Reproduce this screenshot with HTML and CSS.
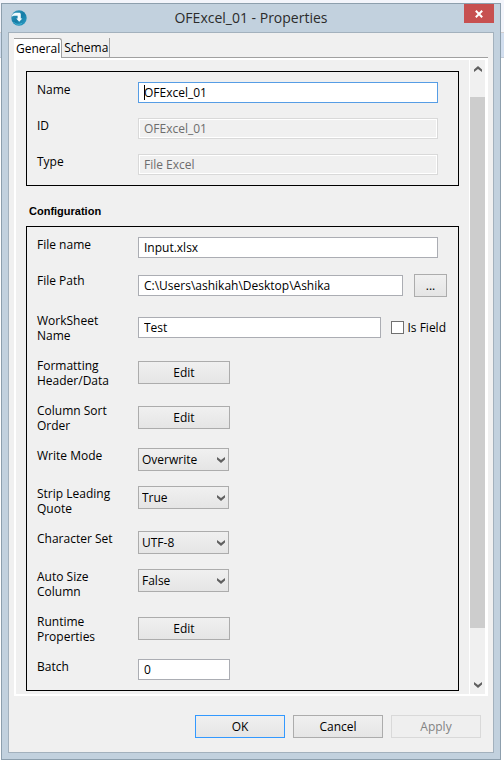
FILE: index.html
```html
<!DOCTYPE html>
<html lang="en">
<head>
<meta charset="utf-8">
<meta name="viewport" content="width=device-width, initial-scale=1">
<title>OFExcel_01 - Properties</title>
<link rel="stylesheet" href="styles.css">
</head>
<body>
<main class="window">
  <header class="titlebar">
    <svg class="app-icon" width="16" height="16" viewBox="0 0 16 16" aria-hidden="true">
      <defs>
        <linearGradient id="disc" x1="0" y1="0" x2="1" y2="1">
          <stop offset="0" stop-color="#3a9fc0"/>
          <stop offset="0.5" stop-color="#157ca6"/>
          <stop offset="1" stop-color="#2f9fc6"/>
        </linearGradient>
      </defs>
      <circle cx="8" cy="8" r="7.7" fill="url(#disc)"/>
      <path d="M1 5.6 C1.8 3.6 3.4 2.8 5 2.8 H8 C9.2 2.8 9.8 3.4 9.8 4.6 V8.4 H11.4 L8.2 11.8 L5.2 8.4 H6.6 V5.8 H3.4 C2.4 5.8 1.6 6 0.8 7 Z" fill="#f2fafc"/>
      <path d="M2.6 12.2 C4.6 14.6 8 15 10.8 13.4" fill="none" stroke="#49b9d8" stroke-width="1"/>
    </svg>
    <h1 class="title">OFExcel_01 - Properties</h1>
    <button class="close" type="button" aria-label="Close">
      <svg width="8" height="8" viewBox="0 0 8 8" aria-hidden="true"><path d="M0.8 0.8 L7.2 7.2 M7.2 0.8 L0.8 7.2" stroke="#fff" stroke-width="2"/></svg>
    </button>
  </header>

  <form class="client">
    <nav class="tabs">
      <button class="tab tab-active" type="button">General</button>
      <button class="tab" type="button">Schema</button>
    </nav>

    <div class="panel">
      <div class="content">
        <section class="group">
          <div class="row">
            <label for="name">Name</label>
            <div class="field field-wide focused">
              <input class="text" id="name" type="text" value="OFExcel_01">
              <span class="caret"></span>
            </div>
          </div>
          <div class="row">
            <label for="id">ID</label>
            <div class="field field-wide"><input class="text" id="id" type="text" value="OFExcel_01" disabled></div>
          </div>
          <div class="row">
            <label for="type">Type</label>
            <div class="field field-wide"><input class="text" id="type" type="text" value="File Excel" disabled></div>
          </div>
        </section>

        <h2 class="heading">Configuration</h2>

        <section class="group">
          <div class="row">
            <label for="file-name">File name</label>
            <div class="field field-wide"><input class="text" id="file-name" type="text" value="Input.xlsx"></div>
          </div>
          <div class="row row-path">
            <label for="file-path">File Path</label>
            <div class="field field-path">
              <input class="text" id="file-path" type="text" value="C:\Users\ashikah\Desktop\Ashika">
              <button class="button browse" type="button">...</button>
            </div>
          </div>
          <div class="row row-middle">
            <label for="sheet">WorkSheet Name</label>
            <div class="field field-sheet">
              <input class="text" id="sheet" type="text" value="Test">
              <label class="check" for="is-field"><input class="box" id="is-field" type="checkbox">Is Field</label>
            </div>
          </div>
          <div class="row row-middle">
            <label for="formatting">Formatting Header/Data</label>
            <div class="field"><button class="button edit" id="formatting" type="button">Edit</button></div>
          </div>
          <div class="row row-middle">
            <label for="sort">Column Sort Order</label>
            <div class="field"><button class="button edit" id="sort" type="button">Edit</button></div>
          </div>
          <div class="row">
            <label for="mode">Write Mode</label>
            <div class="field"><div class="combo">
              <select class="select" id="mode"><option>Overwrite</option></select>
              <svg class="arrow" width="8" height="6" viewBox="0 0 8 6" aria-hidden="true"><path d="M0 0 L4 3 L8 0 V2.4 L4 6 L0 2.4 Z"/></svg>
            </div></div>
          </div>
          <div class="row">
            <label for="quote">Strip Leading Quote</label>
            <div class="field"><div class="combo">
              <select class="select" id="quote"><option>True</option></select>
              <svg class="arrow" width="8" height="6" viewBox="0 0 8 6" aria-hidden="true"><path d="M0 0 L4 3 L8 0 V2.4 L4 6 L0 2.4 Z"/></svg>
            </div></div>
          </div>
          <div class="row">
            <label for="charset">Character Set</label>
            <div class="field"><div class="combo">
              <select class="select" id="charset"><option>UTF-8</option></select>
              <svg class="arrow" width="8" height="6" viewBox="0 0 8 6" aria-hidden="true"><path d="M0 0 L4 3 L8 0 V2.4 L4 6 L0 2.4 Z"/></svg>
            </div></div>
          </div>
          <div class="row">
            <label for="autosize">Auto Size Column</label>
            <div class="field"><div class="combo">
              <select class="select" id="autosize"><option>False</option></select>
              <svg class="arrow" width="8" height="6" viewBox="0 0 8 6" aria-hidden="true"><path d="M0 0 L4 3 L8 0 V2.4 L4 6 L0 2.4 Z"/></svg>
            </div></div>
          </div>
          <div class="row row-middle">
            <label for="runtime">Runtime Properties</label>
            <div class="field"><button class="button edit" id="runtime" type="button">Edit</button></div>
          </div>
          <div class="row">
            <label for="batch">Batch</label>
            <div class="field"><input class="text text-short" id="batch" type="text" value="0"></div>
          </div>
        </section>
      </div>

      <div class="scrollbar">
        <button class="scroll-button" type="button" aria-label="Scroll up">
          <svg width="8" height="6" viewBox="0 0 8 6" aria-hidden="true"><path d="M0 6 L4 3 L8 6 V3.6 L4 0 L0 3.6 Z"/></svg>
        </button>
        <div class="track">
          <div class="thumb"></div>
        </div>
        <button class="scroll-button" type="button" aria-label="Scroll down">
          <svg width="8" height="6" viewBox="0 0 8 6" aria-hidden="true"><path d="M0 0 L4 3 L8 0 V2.4 L4 6 L0 2.4 Z"/></svg>
        </button>
      </div>
    </div>

    <footer class="footer">
      <button class="button action default" type="button">OK</button>
      <button class="button action" type="button">Cancel</button>
      <button class="button action" type="button" disabled>Apply</button>
    </footer>
  </form>
</main>
</body>
</html>
```
FILE: styles.css
```css
* {
  box-sizing: border-box;
}

body {
  margin: 0;
  padding: 3px 3px 2px 1px;
  background: linear-gradient(#f3f5fb 32px, #d3cfcf 32px, #d3cfcf 33px, #d3dfef 33px, #d3dfef 57px, #c4ccd8 57px, #c4ccd8 58px, #fff 58px) no-repeat #fff;
  color: #000;
  font: 12px/15px "Open Sans", "Noto Sans", sans-serif;
}

button,
input,
select {
  margin: 0;
  font: inherit;
  color: inherit;
}

.window {
  padding: 0 6px 6px;
  border: 1px solid #8d9fad;
  background: #c2d1de;
}

.titlebar {
  display: grid;
  grid-template-columns: 1fr auto 1fr;
  height: 28px;
}

.app-icon {
  margin: 6px 0 0 3px;
}

.title {
  margin: 0;
  font-size: 14px;
  font-weight: 400;
  line-height: 28px;
  color: #2b2b2b;
}

.close {
  display: flex;
  align-items: center;
  justify-content: center;
  justify-self: end;
  width: 30px;
  height: 19px;
  padding: 0;
  border: 0;
  background: #c75050;
}

.client {
  border: 1px solid #a3b1bd;
  background: #f0f0f0;
}

.tabs {
  display: flex;
  height: 20px;
  margin: 5px 5px 0;
  box-shadow: inset 0 -1px #a0a0a0;
}

.tab {
  padding: 0 1px 0 2px;
  border: 0;
  border-right: 1px solid #a0a0a0;
  background: transparent;
  line-height: 20px;
}

.tab-active {
  border-top: 1px solid #a0a0a0;
  border-top-right-radius: 3px;
  background: #fff;
}

.panel {
  display: flex;
  margin: 0 5px;
  border: 2px solid #fff;
}

.content {
  flex: 1;
  padding: 11px 10px 3px;
}

.group {
  display: flex;
  flex-direction: column;
  gap: 15px;
  padding: 10px;
  border: 1px solid #000;
}

.heading {
  margin: 18px 3px 7px;
  font: bold 11px/15px "Liberation Sans", Arial, sans-serif;
}

.row {
  display: grid;
  grid-template-columns: 76px 1fr;
  column-gap: 25px;
  align-items: start;
}

.row-middle {
  align-items: center;
}

.row-middle .field {
  padding-bottom: 1px;
}

.row-path {
  height: 25px;
}

.field {
  display: flex;
  align-items: center;
}

.field-wide {
  position: relative;
  padding-right: 10px;
}

.field-path {
  gap: 11px;
  height: 25px;
}

.field-sheet {
  gap: 10px;
}

.text {
  flex: 1;
  min-width: 0;
  height: 21px;
  padding: 0 5px;
  border: 1px solid #abadb3;
  border-radius: 0;
  background: #fff;
}

.text-short {
  flex: 0 0 92px;
}

.text:disabled {
  border-color: #d9d9d9;
  background: #f0f0f0;
  box-shadow: inset 0 0 0 1px #fff;
  color: #6d6d6d;
}

.focused .text {
  border-color: #569de5;
}

.caret {
  position: absolute;
  top: 3px;
  left: 6px;
  width: 1px;
  height: 15px;
  background: #000;
}

.button {
  height: 23px;
  padding: 0;
  border: 1px solid #acacac;
  background: linear-gradient(#f0f0f0, #e5e5e5);
}

.browse {
  width: 33px;
  margin-right: 1px;
}

.edit {
  width: 92px;
}

.check {
  display: flex;
  align-items: center;
  gap: 3px;
  margin-right: 2px;
}

.box {
  width: 13px;
  height: 13px;
  border: 1px solid #707070;
  background: #fff;
  appearance: none;
}

.combo {
  position: relative;
  width: 91px;
}

.select {
  display: block;
  width: 100%;
  height: 23px;
  padding: 0 3px;
  border: 1px solid #acacac;
  border-radius: 0;
  background: linear-gradient(#f0f0f0, #e5e5e5);
  appearance: none;
}

.arrow {
  position: absolute;
  top: 9px;
  right: 4px;
  pointer-events: none;
}

.arrow,
.scroll-button {
  fill: #606060;
}

.scrollbar {
  display: flex;
  flex-direction: column;
  width: 17px;
  border: solid #fff;
  border-width: 0 1px;
}

.scroll-button {
  display: flex;
  align-items: center;
  justify-content: center;
  height: 18px;
  padding: 0;
  border: 0;
  background: none;
}

.track {
  display: grid;
  flex: 1;
  grid-template-rows: 19fr 531fr 48fr;
}

.thumb {
  grid-row: 2;
  background: #cdcdcd;
}

.footer {
  display: flex;
  justify-content: flex-end;
  gap: 8px;
  padding: 19px 12px 14px;
}

.action {
  width: 90px;
}

.default {
  border-color: #3399ff;
}

.button:disabled {
  border-color: #d9d9d9;
  background: #efefef;
  color: #838383;
}
```
